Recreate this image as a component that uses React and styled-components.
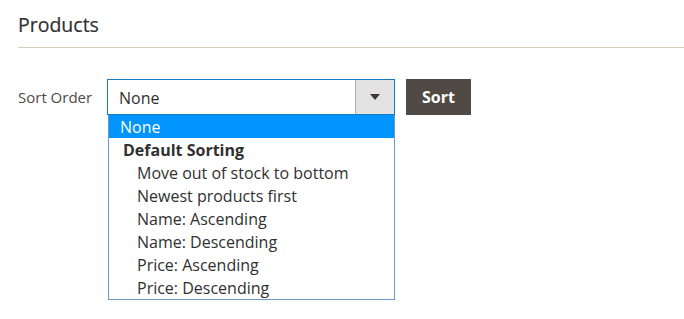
import React from "react";
import styled, { createGlobalStyle } from "styled-components";

const GlobalStyle = createGlobalStyle`
  body {
    margin: 0;
    background: #ffffff;
    font-family: "Open Sans", "Liberation Sans", sans-serif;
  }
`;

const options = [
  { label: "None", selected: true },
  { label: "Default Sorting", group: true },
  { label: "Move out of stock to bottom", nested: true },
  { label: "Newest products first", nested: true },
  { label: "Name: Ascending", nested: true },
  { label: "Name: Descending", nested: true },
  { label: "Price: Ascending", nested: true },
  { label: "Price: Descending", nested: true },
];

function App() {
  return (
    <Page>
      <GlobalStyle />
      <Header>
        <Title>Products</Title>
      </Header>
      <FormRow>
        <Label>Sort Order</Label>
        <SelectWrap>
          <Select>
            <Value>None</Value>
            <ArrowBox>
              <svg width="10" height="6" viewBox="0 0 10 6">
                <path d="M0 0h10L5 6z" fill="#41362f" />
              </svg>
            </ArrowBox>
          </Select>
          <Dropdown>
            {options.map((o) => (
              <Option
                key={o.label}
                $selected={o.selected}
                $group={o.group}
                $nested={o.nested}
              >
                {o.label}
              </Option>
            ))}
          </Dropdown>
        </SelectWrap>
        <SortButton>Sort</SortButton>
      </FormRow>
    </Page>
  );
}

export default App;

const Page = styled.div`
  padding: 0 0 0 18px;
  min-height: 319px;
`;

const Header = styled.div`
  border-bottom: 1px solid #d6cbbd;
  padding-top: 11px;
  padding-bottom: 9px;
`;

const Title = styled.h2`
  margin: 0;
  font-size: 19.5px;
  font-weight: 400;
  line-height: 27px;
  color: #303030;
  -webkit-text-stroke: 0.2px #303030;
`;

const FormRow = styled.div`
  display: flex;
  align-items: flex-start;
  margin-top: 31px;
`;

const Label = styled.span`
  font-size: 15px;
  line-height: 36px;
  color: #514943;
  width: 89px;
`;

const SelectWrap = styled.div`
  display: flex;
  flex-direction: column;
  width: 288px;
`;

const Select = styled.div`
  display: flex;
  height: 36px;
  box-sizing: border-box;
  border: 1px solid #1979c3;
  background: #fff;
`;

const Value = styled.span`
  flex: 1;
  padding-left: 11px;
  font-size: 16px;
  line-height: 36px;
  color: #303030;
`;

const ArrowBox = styled.span`
  width: 38px;
  background: #e3e3e3;
  border-left: 1px solid #adadad;
  display: flex;
  align-items: center;
  justify-content: center;
`;

const Dropdown = styled.div`
  margin-left: 1px;
  width: 287px;
  box-sizing: border-box;
  border: 1px solid #6a98cf;
  border-top: none;
  background: #fff;
`;

const Option = styled.div`
  height: 23px;
  line-height: 25px;
  font-size: 16px;
  overflow: hidden;
  padding-left: ${(p) => (p.$nested ? "28px" : p.$group ? "14px" : "11px")};
  font-weight: ${(p) => (p.$group ? 700 : 400)};
  background: ${(p) => (p.$selected ? "#0094ff" : "transparent")};
  color: ${(p) => (p.$selected ? "#ffffff" : "#303030")};
`;

const SortButton = styled.button`
  margin-left: 11px;
  width: 65px;
  height: 36px;
  border: none;
  background: #514943;
  color: #ffffff;
  font-family: "Open Sans", "Liberation Sans", sans-serif;
  font-size: 16px;
  font-weight: 700;
  padding: 0;
`;
